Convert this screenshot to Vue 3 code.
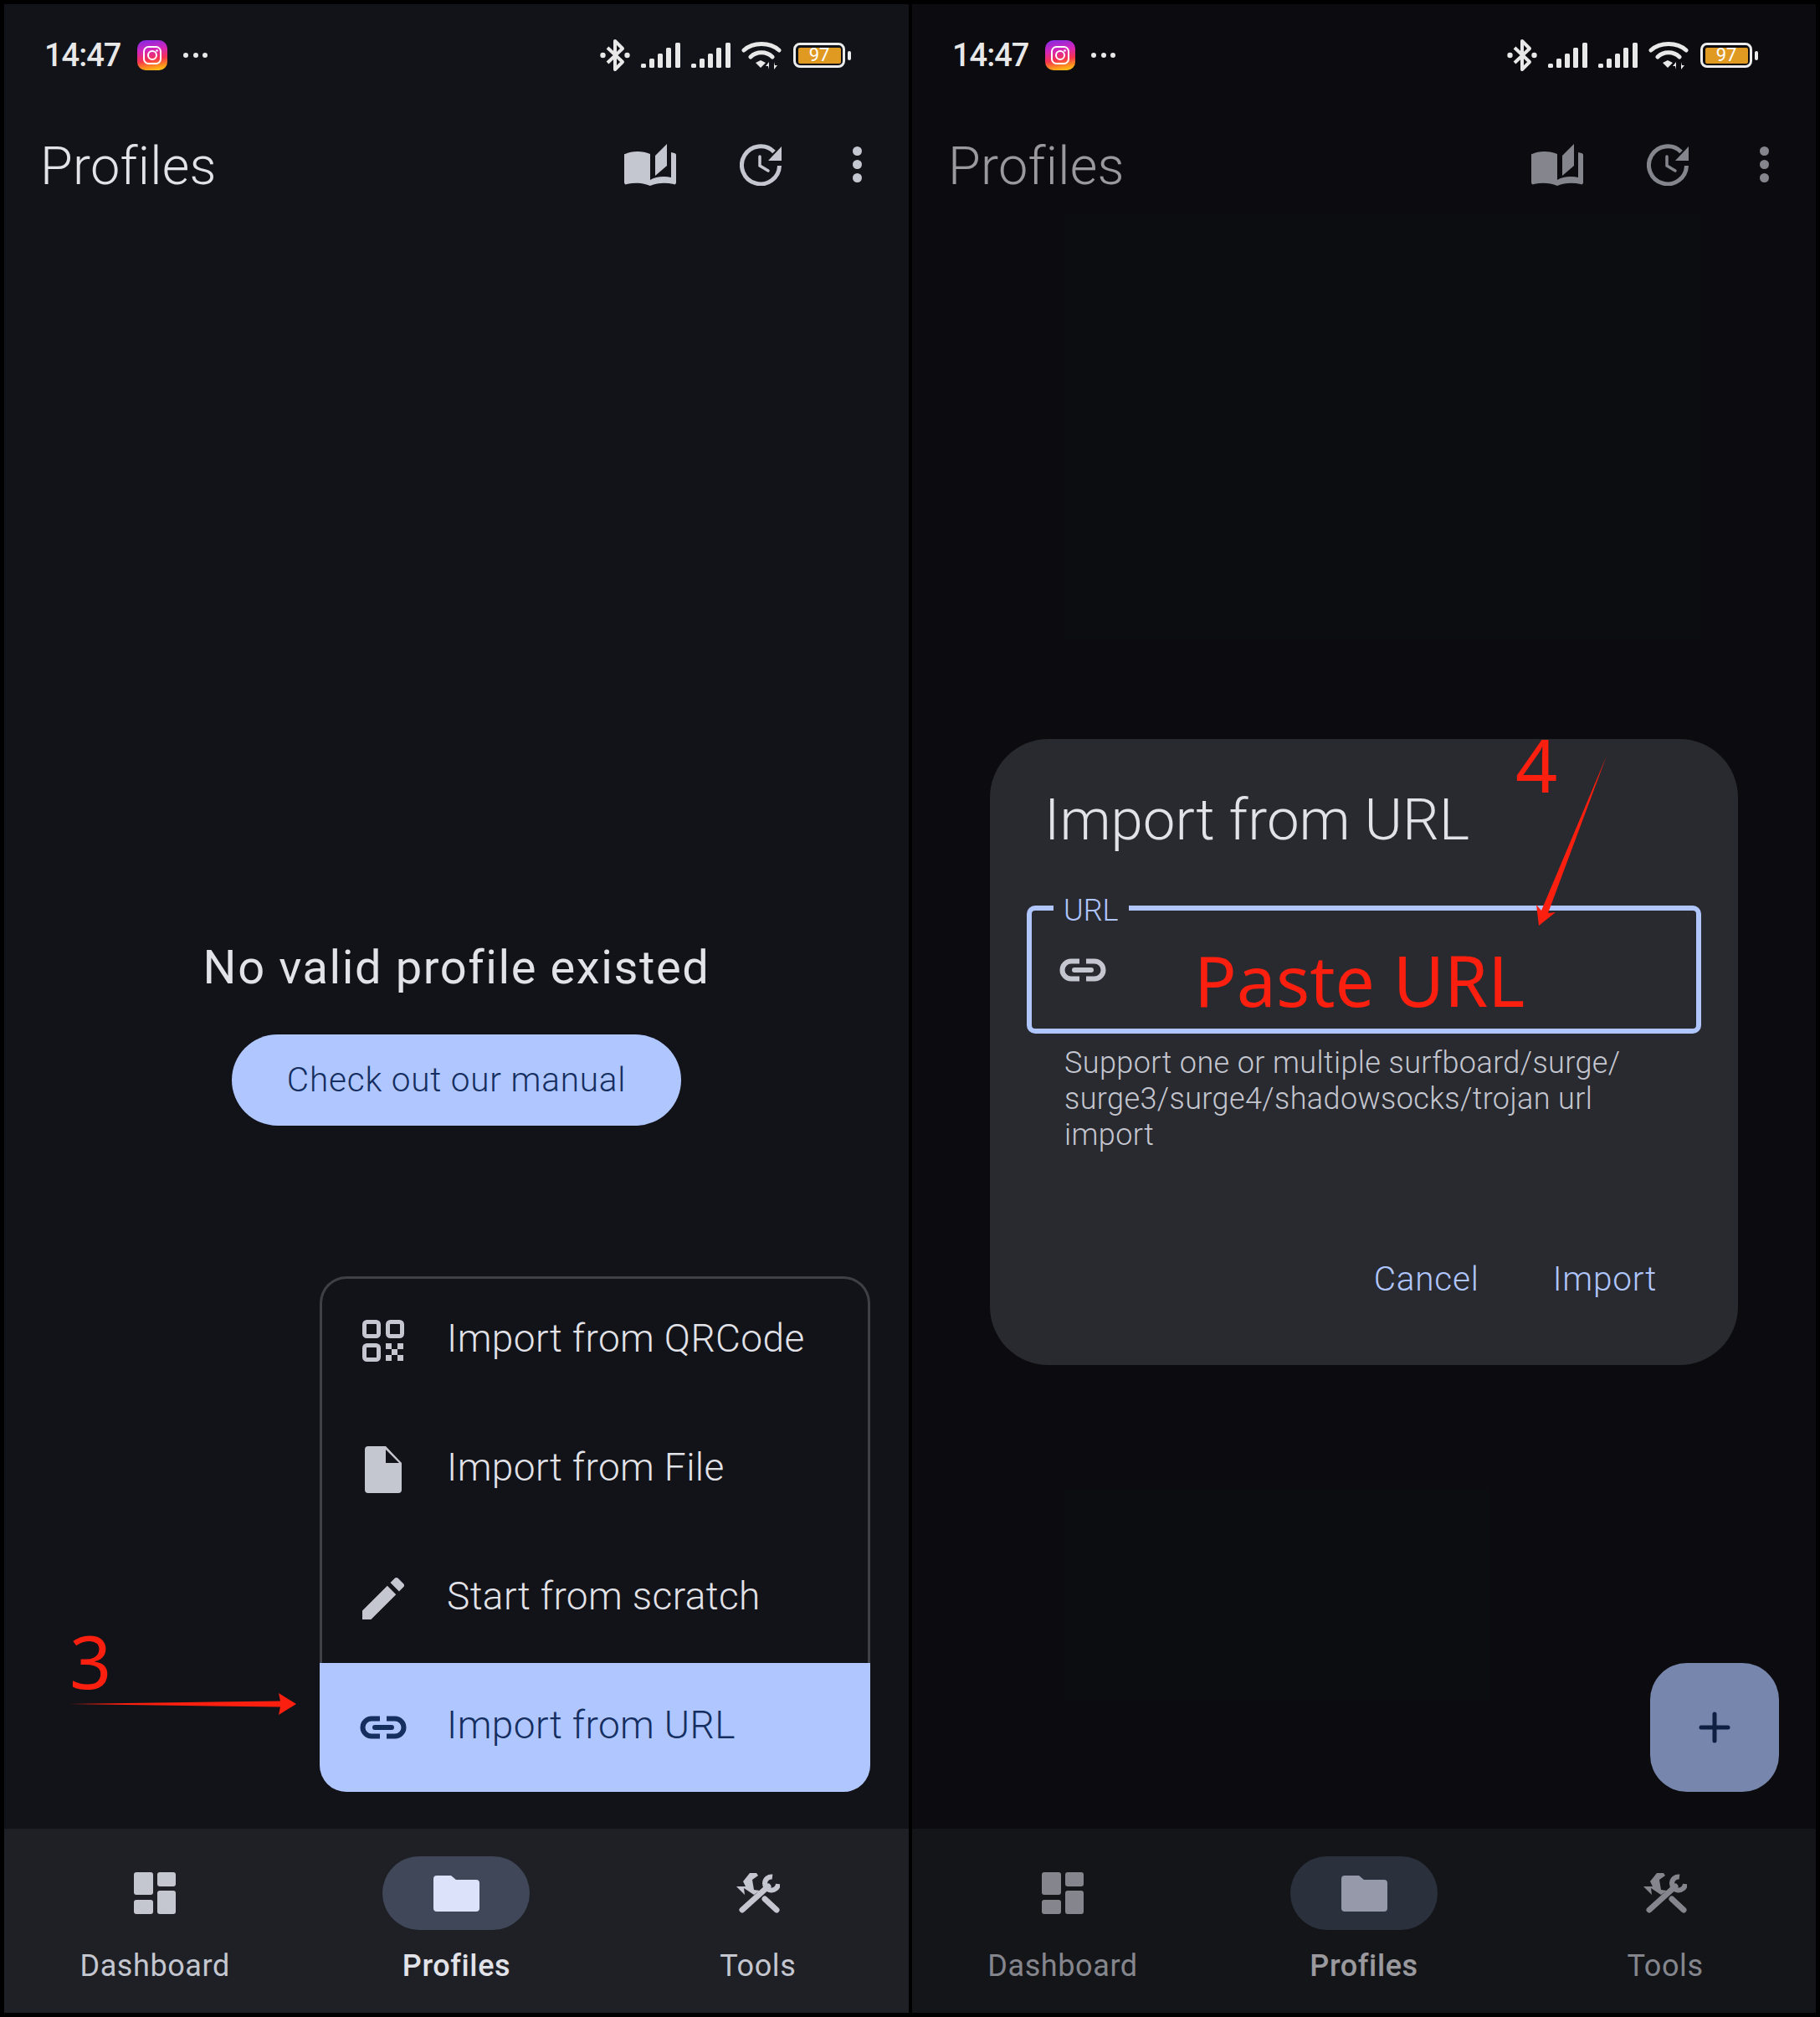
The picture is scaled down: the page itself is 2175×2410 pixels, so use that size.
<template>
  <svg class="defs" aria-hidden="true">
    <symbol id="i-book" viewBox="0 0 62 50">
      <path d="M1 12C9 8 22 8 31 12V43C37 39 48 38 56 40V10L60 11C61 11 62 12 62 13V46C62 48 60 49 59 48C50 46 40 46 31 50C22 46 12 46 3 48C2 49 0 48 0 46V13C0 12 0 12 1 12Z" fill="currentColor" />
      <path d="M37 14L51 0V26L37 38Z" fill="currentColor" />
    </symbol>
    <symbol id="i-history" viewBox="0 0 50 50">
      <path d="M41 9.5A22.5 22.5 0 1 0 47.5 26" fill="none" stroke="currentColor" stroke-width="5" />
      <path d="M50 3V20H34Z" fill="currentColor" />
      <path d="M24 15V26L34 32" fill="none" stroke="currentColor" stroke-width="3.5" stroke-linecap="round" />
    </symbol>
    <symbol id="i-link" viewBox="0 0 56 28">
      <path d="M24 3.5H14a10.5 10.5 0 0 0 0 21H24M32 3.5H42a10.5 10.5 0 0 1 0 21H32" fill="none" stroke="currentColor" stroke-width="6" />
      <path d="M18 14H38" fill="none" stroke="currentColor" stroke-width="6" stroke-linecap="round" />
    </symbol>
    <symbol id="i-qr" viewBox="0 0 50 50">
      <g fill="none" stroke="currentColor" stroke-width="5">
        <rect x="2.5" y="2.5" width="17" height="17" rx="3" />
        <rect x="30.5" y="2.5" width="17" height="17" rx="3" />
        <rect x="2.5" y="30.5" width="17" height="17" rx="3" />
      </g>
      <g fill="currentColor">
        <rect x="28" y="28" width="7" height="7" />
        <rect x="42" y="28" width="7" height="7" />
        <rect x="35" y="35" width="7" height="7" />
        <rect x="28" y="42" width="7" height="7" />
        <rect x="42" y="42" width="7" height="7" />
      </g>
    </symbol>
    <symbol id="i-file" viewBox="0 0 44 56">
      <path d="M4 0H25L44 20V52a4 4 0 0 1-4 4H4a4 4 0 0 1-4-4V4a4 4 0 0 1 4-4Z M25 4V20H41Z" fill="currentColor" fill-rule="evenodd" />
    </symbol>
    <symbol id="i-edit" viewBox="3 3 18 18">
      <path d="M3 17.25V21h3.75L17.5 10.25l-3.75-3.75L3 17.25zM20.71 7.04c.39-.39.39-1.02 0-1.41l-2.34-2.34c-.39-.39-1.02-.39-1.41 0l-1.9 1.9 3.75 3.75 1.9-1.9z" fill="currentColor" />
    </symbol>
    <symbol id="i-dashboard" viewBox="0 0 50 50">
      <g fill="currentColor">
        <rect x="0" y="0" width="23" height="27" rx="3" />
        <rect x="28" y="0" width="22" height="17" rx="3" />
        <rect x="0" y="33" width="23" height="17" rx="3" />
        <rect x="28" y="22" width="22" height="28" rx="3" />
      </g>
    </symbol>
    <symbol id="i-folder" viewBox="0 0 55 43">
      <path d="M4 0H21L27 5H51a4 4 0 0 1 4 4V39a4 4 0 0 1-4 4H4a4 4 0 0 1-4-4V4a4 4 0 0 1 4-4Z" fill="currentColor" />
    </symbol>
    <symbol id="i-tools" viewBox="0 0 52 50">
      <path d="M7 45L38 17M48 45L34 32" fill="none" stroke="currentColor" stroke-width="7" stroke-linecap="round" />
      <path d="M43 5.5A8 8 0 1 0 50 14" fill="none" stroke="currentColor" stroke-width="6" />
      <path d="M0 17H11L8 11L16 1H24L26 4L19 9L21 21L28 22L21 27L9 19L10 27Z" fill="currentColor" />
    </symbol>
    <symbol id="i-bluetooth" viewBox="0 0 36 40">
      <path d="M9 11L27 28L18 37V3L27 12L9 29" fill="none" stroke="currentColor" stroke-width="4" stroke-linejoin="round" />
      <circle cx="3.5" cy="20" r="3.2" fill="currentColor" />
      <circle cx="32.5" cy="20" r="3.2" fill="currentColor" />
    </symbol>
    <symbol id="i-signal" viewBox="0 0 48 30">
      <g fill="currentColor">
        <rect x="0" y="25" width="6" height="5" rx="1.5" />
        <rect x="10" y="19" width="6" height="11" rx="1.5" />
        <rect x="20" y="13" width="6" height="17" rx="1.5" />
        <rect x="30" y="6" width="6" height="24" rx="1.5" />
        <rect x="41" y="0" width="6" height="30" rx="1.5" />
      </g>
    </symbol>
    <symbol id="i-wifi" viewBox="0 0 48 34">
      <path d="M3 11C14 1 34 1 45 11M11 19C18 12 30 12 37 19" fill="none" stroke="currentColor" stroke-width="5" stroke-linecap="round" />
      <path d="M17 26L23 23L29 26L23 32Z" fill="currentColor" />
      <path d="M33 34V25L29 30H32ZM39 25V34L43 29H40Z" fill="currentColor" />
    </symbol>
  </svg>

  <div class="screens">
    <section v-for="panel in panels" :key="panel.id" class="panel" :class="panel.id">
      <div class="status">
        <span class="time">14:47</span>
        <span class="insta">
          <svg viewBox="0 0 36 36" width="36" height="36">
            <rect x="8" y="8" width="20" height="20" rx="5.5" fill="none" stroke="#fff" stroke-width="2" />
            <circle cx="18" cy="18" r="5" fill="none" stroke="#fff" stroke-width="2" />
            <circle cx="23.5" cy="12.5" r="1.3" fill="#fff" />
          </svg>
        </span>
        <span class="more"><i></i><i></i><i></i></span>
        <span class="status-right">
          <svg class="s-bt"><use href="#i-bluetooth" /></svg>
          <svg class="s-sig"><use href="#i-signal" /></svg>
          <svg class="s-sig"><use href="#i-signal" /></svg>
          <svg class="s-wifi"><use href="#i-wifi" /></svg>
          <span class="battery"><span class="level">97</span></span>
          <span class="nub"></span>
        </span>
      </div>

      <header class="appbar">
        <h1>Profiles</h1>
        <svg class="a-book"><use href="#i-book" /></svg>
        <svg class="a-history"><use href="#i-history" /></svg>
        <span class="kebab"><i></i><i></i><i></i></span>
      </header>

      <main class="content">
        <template v-if="panel.id === 'menu'">
          <p class="empty">No valid profile existed</p>
          <button class="manual">Check out our manual</button>
        </template>
      </main>

      <nav class="nav">
        <div v-for="tab in tabs" :key="tab.label" class="tab" :class="{ on: tab.active }">
          <span class="pill">
            <svg :class="tab.cls"><use :href="'#' + tab.icon" /></svg>
          </span>
          <span class="tab-label">{{ tab.label }}</span>
        </div>
      </nav>

      <template v-if="panel.id === 'menu'">
        <ul class="import-menu">
          <li v-for="item in menuItems" :key="item.label" :class="{ hot: item.hot }">
            <span class="m-icon"><svg :class="item.cls"><use :href="'#' + item.icon" /></svg></span>
            <span class="m-text">{{ item.label }}</span>
          </li>
        </ul>
        <span class="mark three">3</span>
        <svg class="arrow-3" viewBox="0 0 272 26">
          <path d="M0 13L253 9.5L251 0L272 13L251 26L253 16.5Z" fill="#fb1f0f" />
        </svg>
      </template>

      <template v-else>
        <button class="fab">
          <svg viewBox="0 0 38 38" width="38" height="38">
            <path d="M19 3V35M3 19H35" stroke="currentColor" stroke-width="5" stroke-linecap="round" />
          </svg>
        </button>
        <div class="scrim"></div>
        <div class="dialog">
          <h2>Import from URL</h2>
          <div class="field">
            <span class="field-label">URL</span>
            <svg class="f-link"><use href="#i-link" /></svg>
            <span class="paste">Paste URL</span>
          </div>
          <p class="helper">Support one or multiple surfboard/surge/<br />surge3/surge4/shadowsocks/trojan url<br />import</p>
          <div class="actions">
            <button>Cancel</button>
            <button>Import</button>
          </div>
          <span class="mark four">4</span>
          <svg class="arrow-4" viewBox="0 0 84 203">
            <path d="M84 0L14 188L23 187L3 203L0 178L6 185Z" fill="#fb1f0f" />
          </svg>
        </div>
      </template>
    </section>
  </div>
</template>

<script setup>
const panels = [{ id: 'menu' }, { id: 'modal' }]

const tabs = [
  { label: 'Dashboard', icon: 'i-dashboard', cls: 'n-dash' },
  { label: 'Profiles', icon: 'i-folder', cls: 'n-folder', active: true },
  { label: 'Tools', icon: 'i-tools', cls: 'n-tools' },
]

const menuItems = [
  { label: 'Import from QRCode', icon: 'i-qr', cls: 'm-qr' },
  { label: 'Import from File', icon: 'i-file', cls: 'm-file' },
  { label: 'Start from scratch', icon: 'i-edit', cls: 'm-edit' },
  { label: 'Import from URL', icon: 'i-link', cls: 'm-link', hot: true },
]
</script>

<style>
html,
body {
  margin: 0;
  background: #000;
}
</style>

<style scoped>
.defs {
  position: absolute;
  width: 0;
  height: 0;
}
.screens {
  display: flex;
  gap: 4px;
  width: 2175px;
  height: 2410px;
  box-sizing: border-box;
  padding: 5px;
  background: #000;
  font-family: Roboto, "Noto Sans", sans-serif;
}
.panel {
  position: relative;
  display: flex;
  flex-direction: column;
  width: 1081px;
  height: 2400px;
  flex: none;
  background: #121318;
  color: #e2e2e9;
  overflow: hidden;
}
.panel.modal {
  width: 1080px;
}

.status {
  position: relative;
  z-index: 3;
  display: flex;
  align-items: center;
  height: 120px;
  padding: 2px 69px 0 48px;
  color: #e8e8e8;
  box-sizing: border-box;
}
.time {
  font-size: 38px;
  font-weight: 500;
  letter-spacing: -1px;
  margin-right: 20px;
}
.insta {
  width: 36px;
  height: 36px;
  border-radius: 10px;
  background: linear-gradient(170deg, #7d2ae8 0%, #d626b8 35%, #f5334f 62%, #ff9a1a 85%, #ffd21a 100%);
}
.insta svg {
  display: block;
}
.more {
  display: flex;
  gap: 5.5px;
  margin-left: 19px;
}
.more i {
  width: 6px;
  height: 6px;
  border-radius: 50%;
  background: #e8e8e8;
}
.status-right {
  display: flex;
  align-items: center;
  margin-left: auto;
}
.s-bt {
  width: 36px;
  height: 40px;
  margin-right: 13px;
}
.s-sig {
  width: 48px;
  height: 30px;
  margin-right: 12px;
}
.s-wifi {
  width: 48px;
  height: 34px;
  margin-right: 14px;
}
.battery {
  display: block;
  box-sizing: border-box;
  width: 62px;
  height: 30px;
  border: 3.5px solid #ececec;
  border-radius: 8px;
  padding: 2.5px;
}
.level {
  display: block;
  height: 100%;
  border-radius: 2px;
  background: #e09a22;
  color: #fff;
  font-size: 22px;
  line-height: 18px;
  font-weight: 400;
  text-align: center;
}
.nub {
  width: 4px;
  height: 11px;
  margin-left: 3px;
  border-radius: 2px;
  background: #ececec;
}

.appbar {
  display: flex;
  align-items: center;
  height: 143px;
  padding: 0 56px 0 43px;
  color: #c4c6d0;
}
.appbar h1 {
  margin: 4px auto 0 0;
  color: #e2e2e9;
  font-size: 63px;
  font-weight: 300;
  letter-spacing: 0.3px;
}
.a-book {
  width: 62px;
  height: 50px;
  margin-right: 76px;
}
.a-history {
  width: 50px;
  height: 50px;
  margin-right: 85px;
}
.kebab {
  display: flex;
  flex-direction: column;
  gap: 5px;
}
.kebab i {
  width: 11px;
  height: 11px;
  border-radius: 50%;
  background: #c4c6d0;
}

.content {
  flex: 1;
  display: flex;
  flex-direction: column;
  align-items: center;
  justify-content: center;
  padding-top: 11px;
}
.empty {
  margin: 0 0 44px;
  font-size: 56px;
  line-height: 72px;
  font-weight: 400;
  letter-spacing: 1.6px;
}
.manual {
  width: 537px;
  height: 109px;
  border: 0;
  border-radius: 55px;
  background: #b0c6ff;
  color: #152e60;
  font-family: inherit;
  font-size: 40.5px;
  font-weight: 300;
  letter-spacing: 0.8px;
}

.nav {
  display: flex;
  height: 220px;
  background: #1e2025;
}
.tab {
  flex: 1;
  display: flex;
  flex-direction: column;
  align-items: center;
  padding-top: 33px;
  color: #c4c6d0;
}
.pill {
  display: flex;
  align-items: center;
  justify-content: center;
  width: 176px;
  height: 88px;
  border-radius: 44px;
}
.tab.on {
  color: #e2e2e9;
}
.tab.on .pill {
  background: #3f4759;
  color: #dce2f9;
}
.tab-label {
  margin-top: 20px;
  font-size: 36px;
  line-height: 46px;
  letter-spacing: 0.6px;
}
.tab.on .tab-label {
  font-weight: 500;
}
.n-dash {
  width: 50px;
  height: 50px;
}
.n-folder {
  width: 55px;
  height: 43px;
}
.n-tools {
  width: 52px;
  height: 50px;
}

.import-menu {
  position: absolute;
  left: 377px;
  top: 1520px;
  width: 658px;
  margin: 0;
  padding: 0;
  list-style: none;
  border-radius: 32px;
  overflow: hidden;
  box-shadow: inset 0 0 0 3px #3f4046;
  background: #121318;
}
.import-menu li {
  display: flex;
  align-items: center;
  height: 154px;
  padding-left: 48px;
  font-size: 46px;
  font-weight: 300;
  letter-spacing: 0.4px;
}
.m-text {
  position: relative;
  top: -3px;
}
.import-menu li.hot {
  background: #b0c6ff;
  color: #152e60;
}
.m-icon {
  display: flex;
  align-items: center;
  justify-content: center;
  width: 56px;
  margin-right: 48px;
  color: #c4c6d0;
}
.hot .m-icon {
  color: #152e60;
}
.m-qr,
.m-edit {
  width: 50px;
  height: 50px;
}
.m-file {
  width: 44px;
  height: 56px;
}
.m-link {
  width: 56px;
  height: 28px;
}

.mark {
  position: absolute;
  color: #fb1f0f;
  font-family: "Noto Sans", sans-serif;
  font-size: 88px;
  font-weight: 400;
  line-height: 88px;
}
.three {
  left: 78px;
  top: 1935px;
}
.arrow-3 {
  position: absolute;
  left: 77px;
  top: 2018px;
  width: 272px;
  height: 26px;
}

.fab {
  position: absolute;
  left: 882px;
  top: 1982px;
  width: 154px;
  height: 154px;
  display: flex;
  align-items: center;
  justify-content: center;
  padding: 0;
  border: 0;
  border-radius: 44px;
  background: #b0c6ff;
  color: #152e60;
}
.scrim {
  position: absolute;
  inset: 0;
  z-index: 2;
  background: rgba(0, 0, 0, 0.32);
}
.dialog {
  position: absolute;
  z-index: 4;
  left: 93px;
  top: 878px;
  width: 894px;
  height: 748px;
  box-sizing: border-box;
  padding: 60px 44px 0;
  border-radius: 70px;
  background: #292a2f;
}
.dialog h2 {
  margin: 0 0 65px 21px;
  font-size: 69px;
  line-height: 74px;
  font-weight: 300;
}
.field {
  position: relative;
  display: flex;
  align-items: center;
  box-sizing: border-box;
  height: 153px;
  padding-left: 33px;
  border: 6px solid #b0c6ff;
  border-radius: 10px;
  color: #c4c6d0;
}
.field-label {
  position: absolute;
  left: 26px;
  top: -20px;
  padding: 0 12px;
  background: #292a2f;
  color: #b0c6ff;
  font-size: 36px;
  font-weight: 300;
  line-height: 40px;
}
.f-link {
  width: 56px;
  height: 28px;
}
.paste {
  position: absolute;
  left: 194px;
  top: 28px;
  color: #fb1f0f;
  font-family: "Noto Sans", sans-serif;
  font-size: 84px;
  line-height: 110px;
}
.helper {
  margin: 14px 0 0 45px;
  color: #c4c6d0;
  font-size: 36px;
  font-weight: 300;
  line-height: 43px;
  letter-spacing: 0.4px;
}
.actions {
  display: flex;
  justify-content: flex-end;
  gap: 88px;
  margin: 120px 53px 0 0;
}
.actions button {
  padding: 0;
  border: 0;
  background: none;
  color: #b0c6ff;
  font-family: inherit;
  font-size: 40.5px;
  font-weight: 300;
  line-height: 60px;
  letter-spacing: 0.8px;
}
.four {
  left: 628px;
  top: -14px;
}
.arrow-4 {
  position: absolute;
  left: 653px;
  top: 20px;
  width: 84px;
  height: 203px;
}
</style>
